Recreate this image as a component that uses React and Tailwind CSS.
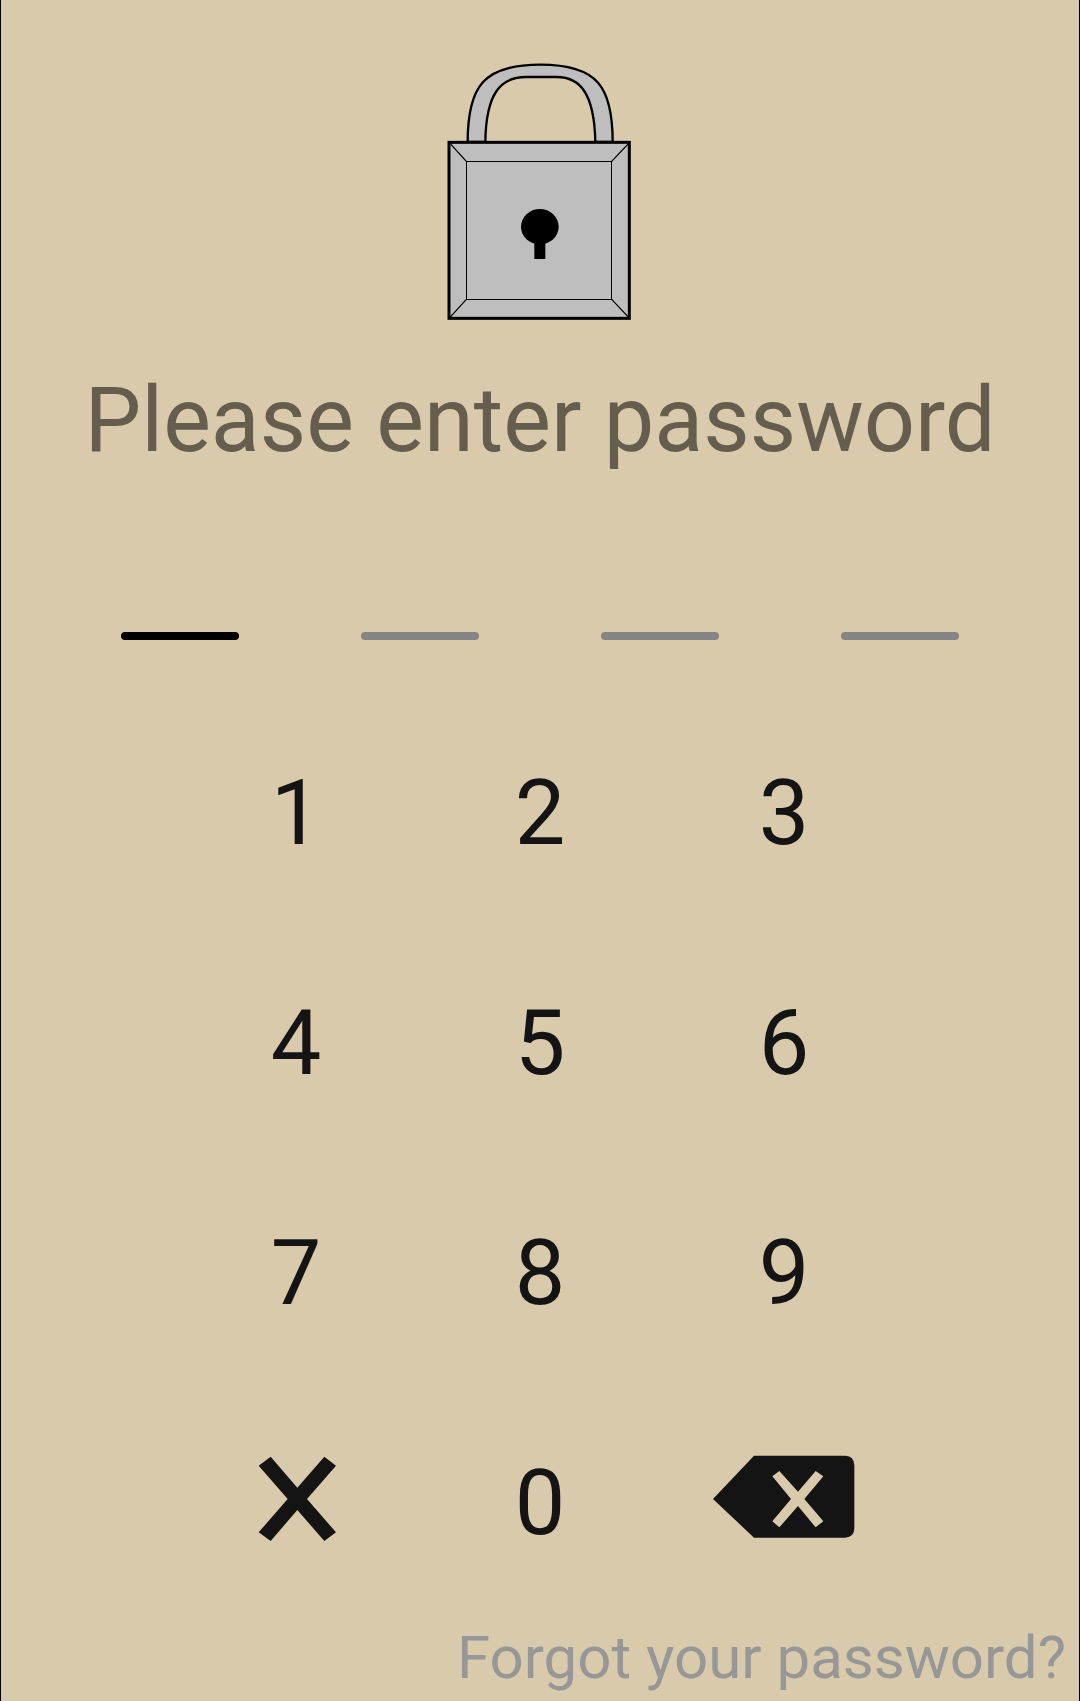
import React, { useState } from "react";

const PIN_LENGTH = 4;

const LockIcon = () => (
  <svg
    viewBox="48 39 564 771"
    className="h-[257px] w-[188px]"
    fill="#bebebe"
    stroke="#000"
    aria-hidden="true"
  >
    <path
      d="M113 276 C113 110 160 44 331 44 C502 44 548 110 548 276 H496 C493 130 450 81 380 81 H288 C212 81 168 130 166 276 Z"
      strokeWidth="7"
    />
    <rect x="57" y="277" width="541" height="528" strokeWidth="9" />
    <g fill="none" strokeWidth="3">
      <rect x="109.5" y="334.5" width="435" height="414" />
      <path
        d="M60 280 L109 334 M596 280 L545 334 M60 802 L109 748 M596 802 L545 748"
        strokeWidth="4"
      />
    </g>
    <g fill="#000" stroke="none">
      <ellipse cx="329.5" cy="530" rx="56.5" ry="53" />
      <rect x="313" y="570" width="33" height="57" />
    </g>
  </svg>
);

const ClearIcon = () => (
  <svg
    viewBox="42 45 252 288"
    className="h-[96px] w-[84px]"
    fill="currentColor"
    aria-hidden="true"
  >
    <path d="M92 50 L172 143 L253 50 L288 77 L201 177 L288 277 L253 303 L172 210 L92 303 L56 277 L143 177 L56 77 Z" />
  </svg>
);

const BackspaceIcon = () => (
  <svg
    viewBox="36 45 432 288"
    className="h-[96px] w-[144px]"
    fill="currentColor"
    fillRule="evenodd"
    aria-hidden="true"
  >
    <path d="M39 177 L162 47 H436 Q463 49 463 76 V264 Q463 291 436 293 H162 Z M238 93 L217 109 L273 177 L217 244 L238 262 L294 198 L347 262 L370 244 L313 177 L370 109 L347 93 L294 155 Z" />
  </svg>
);

const KeyButton = ({ label, onClick, children }) => (
  <button
    type="button"
    aria-label={label}
    onClick={onClick}
    className="flex h-[230px] items-center justify-center text-[90px] leading-[105px]"
  >
    {children}
  </button>
);

const App = () => {
  const [pin, setPin] = useState("");

  const addDigit = (digit) => {
    if (pin.length < PIN_LENGTH) setPin(pin + digit);
  };

  return (
    <main className="flex min-h-screen flex-col items-center border-x border-black bg-[#d9caab] pt-[63px] font-['Roboto',sans-serif] text-[#141414]">
      <LockIcon />
      <h1 className="mt-[48px] text-center text-[90px] leading-[105px] text-[#655d4d]">
        Please enter password
      </h1>

      <div className="mt-[159px] grid w-full grid-cols-4 justify-items-center px-[59px]">
        {[...Array(PIN_LENGTH)].map((_, index) => (
          <span
            key={index}
            className={`h-[8px] w-[118px] rounded-full ${
              index === pin.length ? "bg-black" : "bg-[#848484]"
            }`}
          />
        ))}
      </div>

      <div className="mt-[58px] grid w-full max-w-[732px] grid-cols-3">
        {["1", "2", "3", "4", "5", "6", "7", "8", "9"].map((digit) => (
          <KeyButton key={digit} label={digit} onClick={() => addDigit(digit)}>
            {digit}
          </KeyButton>
        ))}
        <KeyButton label="Clear" onClick={() => setPin("")}>
          <ClearIcon />
        </KeyButton>
        <KeyButton label="0" onClick={() => addDigit("0")}>
          0
        </KeyButton>
        <KeyButton label="Delete" onClick={() => setPin(pin.slice(0, -1))}>
          <BackspaceIcon />
        </KeyButton>
      </div>

      <a
        href="#forgot"
        className="mt-[5px] self-end pr-[13px] text-[60px] leading-[70px] text-[#979797]"
      >
        Forgot your password?
      </a>
    </main>
  );
};

export default App;
